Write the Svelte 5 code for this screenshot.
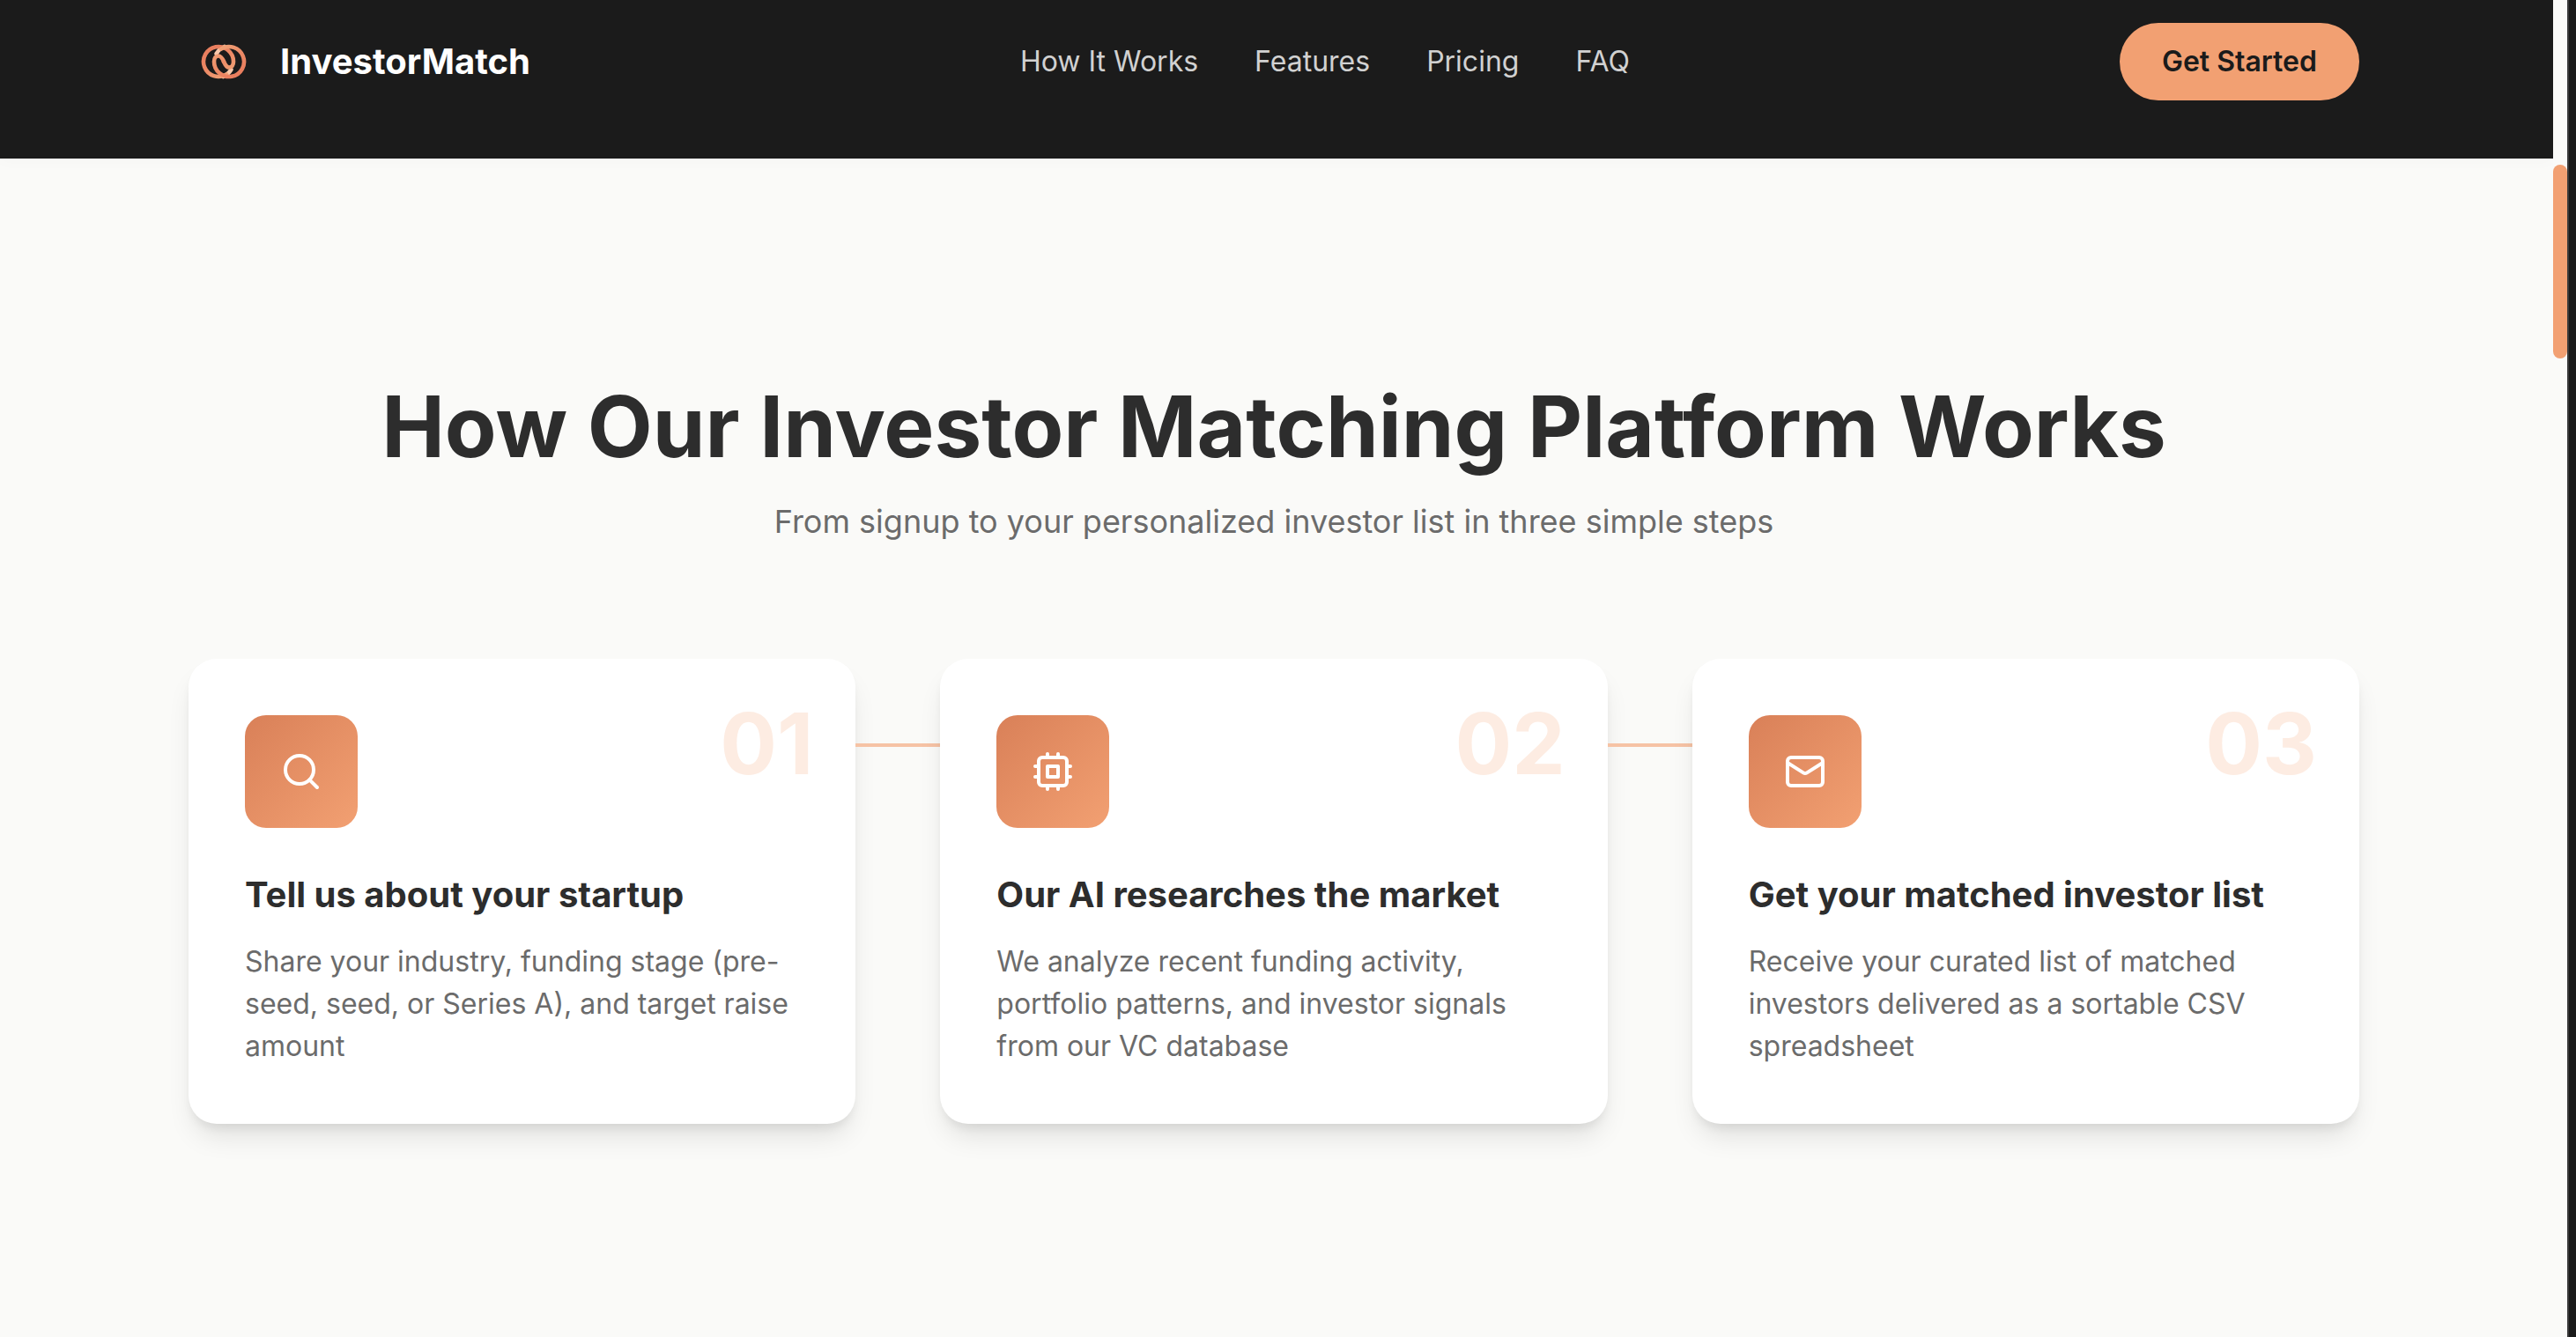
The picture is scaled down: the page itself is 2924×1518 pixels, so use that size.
<script lang="ts">
  type Step = { number: string; icon: "search" | "cpu" | "mail"; title: string; text: string };

  const links = [
    { label: "How It Works", href: "#how-it-works" },
    { label: "Features", href: "#features" },
    { label: "Pricing", href: "#pricing" },
    { label: "FAQ", href: "#faq" },
  ];

  const steps: Step[] = [
    {
      number: "01",
      icon: "search",
      title: "Tell us about your startup",
      text: "Share your industry, funding stage (pre-seed, seed, or Series A), and target raise amount",
    },
    {
      number: "02",
      icon: "cpu",
      title: "Our AI researches the market",
      text: "We analyze recent funding activity, portfolio patterns, and investor signals from our VC database",
    },
    {
      number: "03",
      icon: "mail",
      title: "Get your matched investor list",
      text: "Receive your curated list of matched investors delivered as a sortable CSV spreadsheet",
    },
  ];
</script>

<div class="window">
  <div class="page">
    <header class="site-header">
      <div class="container bar">
        <a class="brand" href="#top">
          <!-- two open rings joined through the middle by an S -->
          <svg class="logo" viewBox="0 0 80 80" fill="none" stroke-width="4.6" stroke-linecap="round" aria-hidden="true">
            <defs>
              <linearGradient id="ring-left" gradientUnits="userSpaceOnUse" x1="22" y1="28" x2="42" y2="57">
                <stop offset="0" stop-color="#e97e5e" />
                <stop offset="0.5" stop-color="#ec8a66" />
                <stop offset="1" stop-color="#f0a176" />
              </linearGradient>
              <linearGradient id="ring-right" gradientUnits="userSpaceOnUse" x1="58" y1="52" x2="38" y2="23">
                <stop offset="0" stop-color="#e97e5e" />
                <stop offset="0.5" stop-color="#ec8a66" />
                <stop offset="1" stop-color="#f0a176" />
              </linearGradient>
            </defs>
            <path d="M48.4 49C46 53 43 55.500 39.500 57" stroke="#f8c8ab" />
            <path d="M31.600 31C34 27 37 24.500 40.500 23" stroke="#f8c8ab" />
            <path d="M43 54.400A17 17 0 1 1 51 40C51 44 49 46.500 46 46.500C43 46.500 41.500 43.500 40 40" stroke="url(#ring-left)" />
            <path d="M37 25.600A17 17 0 1 1 29 40C29 36 31 33.500 34 33.500C37 33.500 38.500 36.500 40 40" stroke="url(#ring-right)" />
          </svg>
          <span>InvestorMatch</span>
        </a>
        <nav aria-label="Main">
          {#each links as link}
            <a href={link.href}>{link.label}</a>
          {/each}
        </nav>
        <button class="cta" type="button">Get Started</button>
      </div>
    </header>

    <main>
      <section class="container how" id="how-it-works">
        <h1>How Our Investor Matching Platform Works</h1>
        <p class="lead">From signup to your personalized investor list in three simple steps</p>

        <ol class="steps">
          {#each steps as step}
            <li class="card">
              <span class="number">{step.number}</span>
              <div class="icon">
                <svg viewBox="0 0 24 24" aria-hidden="true">
                  {#if step.icon === "search"}
                    <circle cx="11" cy="11" r="8" />
                    <path d="m21 21-4.35-4.35" />
                  {:else if step.icon === "cpu"}
                    <rect x="4" y="4" width="16" height="16" rx="2" />
                    <rect x="9" y="9" width="6" height="6" />
                    <path d="M15 2v2M15 20v2M2 15h2M2 9h2M20 15h2M20 9h2M9 2v2M9 20v2" />
                  {:else}
                    <rect x="2" y="4" width="20" height="16" rx="2" />
                    <path d="m22 7-8.97 5.7a1.94 1.94 0 0 1-2.06 0L2 7" />
                  {/if}
                </svg>
              </div>
              <h2>{step.title}</h2>
              <p>{step.text}</p>
            </li>
          {/each}
        </ol>
      </section>
    </main>
  </div>

  <div class="scroll-track" aria-hidden="true">
    <div class="scroll-thumb"></div>
  </div>
</div>

<style>
  :global(body) { margin: 0; background: #fafaf8; }

  .window {
    display: grid;
    grid-template-columns: minmax(0, 1fr) 18px;
    min-height: 100vh;
    box-sizing: border-box;
    border-right: 8px solid #1a1a1a;
    background: #fafaf8;
    color: #2d2d2d;
    font-family: Inter, "Liberation Sans", sans-serif;
  }

  .container { box-sizing: border-box; max-width: 2560px; margin: 0 auto; padding: 0 48px; }

  .site-header { padding: 26px 6px 66px 0; background: #1b1b1b; box-shadow: 0 4px 16px rgba(0, 0, 0, 0.02); }
  .bar { display: flex; align-items: center; justify-content: space-between; }
  .brand { display: flex; align-items: center; gap: 24px; color: #fff; font-size: 40px; font-weight: 700; text-decoration: none; }
  .logo { width: 80px; height: 80px; }
  nav { display: flex; gap: 64px; }
  nav a { color: #d1d1d1; font-size: 32px; text-decoration: none; }
  .cta { height: 88px; padding: 0 48px; border: 0; border-radius: 44px; background: #f2a072; color: #1b1b1b; font: inherit; font-size: 32px; font-weight: 600; }
  .brand span, nav, .cta { padding-bottom: 2px; }

  main { padding-right: 6px; }
  .how { padding-top: 244px; padding-bottom: 240px; text-align: center; }
  h1 { margin: 0; font-size: 96px; font-weight: 700; line-height: 120px; }
  .lead { margin: 20px 0 0; color: #6b6b6b; font-size: 36px; line-height: 56px; }

  .steps { display: grid; grid-template-columns: repeat(3, minmax(0, 1fr)); gap: 96px; margin: 128px 0 0; padding: 0; list-style: none; text-align: left; }
  .card { position: relative; padding: 64px; border-radius: 32px; background: #fff; box-shadow: 0 20px 30px -6px rgba(0, 0, 0, 0.1), 0 8px 12px -4px rgba(0, 0, 0, 0.08); }
  /* connector that runs to the next step */
  .card:not(:last-child)::after { content: ""; position: absolute; top: 96px; left: 100%; width: 96px; height: 4px; background: #f6c3a5; }
  .number { position: absolute; top: 48px; right: 48px; color: #fdece2; font-size: 96px; font-weight: 700; line-height: 96px; }
  .icon { display: grid; place-items: center; width: 128px; height: 128px; border-radius: 24px; background: linear-gradient(135deg, #d98058, #f2a072); }
  .icon svg { width: 48px; height: 48px; fill: none; stroke: #fff; stroke-width: 2; stroke-linecap: round; stroke-linejoin: round; }
  h2 { margin: 48px 0 0; font-size: 40px; font-weight: 700; line-height: 56px; }
  .card p { margin: 24px 0 0; color: #6b6b6b; font-size: 32px; line-height: 48px; }

  .scroll-track { border-right: 2px solid #3a3a3a; background: #fafaf8; }
  .scroll-thumb { height: 220px; margin-top: 187px; border-radius: 8px; background: #f2a072; }
</style>
